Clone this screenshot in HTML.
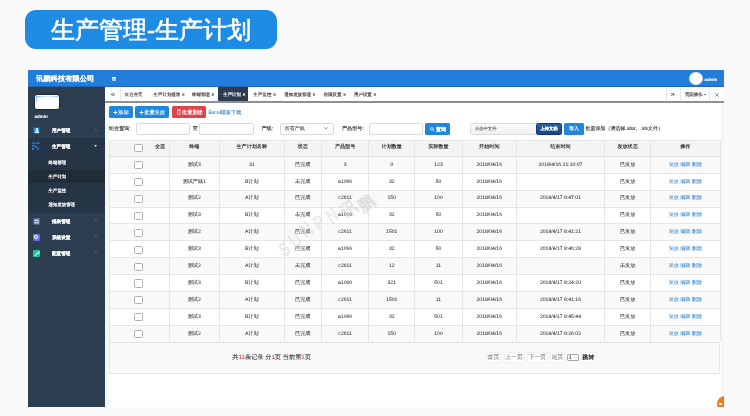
<!DOCTYPE html><html><head><meta charset="utf-8"><style>
*{margin:0;padding:0;box-sizing:border-box}
html,body{width:750px;height:416px;overflow:hidden;background:#fafafa;font-family:"Liberation Sans",sans-serif}
#root{position:absolute;left:0;top:0;width:750px;height:416px;background:#fafafa;will-change:transform;overflow:hidden}
.a{position:absolute;white-space:nowrap}
.tx{position:absolute;white-space:nowrap;text-rendering:geometricPrecision}
#title{left:25px;top:10px;width:252px;height:39px;border-radius:11px;background:#1e8be4}
#title span{position:absolute;left:26px;top:3.5px;font-size:24px;line-height:32px;color:#fff;-webkit-text-stroke:0.65px #fff}
#hdr{left:28px;top:70px;width:696px;height:16.8px;background:#237edb}
#side{left:28px;top:86.8px;width:77px;height:320.2px;background:#2e3e51}
#content{left:105px;top:86.8px;width:619px;height:320.2px;background:#f5f6f8}
#tabs{left:105px;top:86.8px;width:619px;height:14.3px;background:#fff}
#tabline{left:105px;top:101.1px;width:619px;height:1.6px;background:#8c9197}
#panel{left:109px;top:102.7px;width:611.5px;height:304.3px;background:#fff}
.btn{position:absolute;height:12px;border-radius:1.5px}
.inp{position:absolute;height:12px;border:0.7px solid #dadada;border-radius:2px;background:#fff}
.vl{position:absolute;width:0.8px;background:#e6e6e6}
.hl{position:absolute;height:0.8px;background:#e6e6e6}
.cb{position:absolute;width:8.6px;height:8.6px;border:0.8px solid #b0b0b0;border-radius:1.4px;background:#fff}
.tsep{position:absolute;top:87.5px;height:13.5px;width:0.6px;background:#e8e8e8}
.ico{position:absolute;width:7.4px;height:7.4px;border-radius:1px;overflow:hidden}
</style></head><body><div id="root">
<div id="title" class="a"><span>生产管理-生产计划</span></div>
<div id="hdr" class="a"></div>
<div class="a" style="left:28px;top:85.8px;width:696px;height:1px;background:#1868c2"></div>
<div class="tx" style="left:36.00px;top:72.20px;font-size:7.30px;line-height:14.60px;color:#fff;font-weight:bold;-webkit-text-stroke:0.1px #fff;">讯鹏科技有限公司</div>
<div class="a" style="left:112.3px;top:77.2px;width:4px;height:0.9px;background:#fff;box-shadow:0 1.3px 0 #fff,0 2.6px 0 #fff"></div>
<div class="a" style="left:689.4px;top:71.9px;width:13.2px;height:13px;border-radius:50%;background:#fff;border:0.6px solid #cfe3f7"></div>
<div class="tx" style="left:704.60px;top:75.50px;font-size:4.30px;line-height:8.60px;color:#fff;font-weight:bold;-webkit-text-stroke:0.1px #fff;">admin</div>
<div id="side" class="a"></div>
<div id="content" class="a"></div>
<div id="tabs" class="a"></div>
<div id="tabline" class="a"></div>
<div id="panel" class="a"></div>
<div class="a" style="left:33.6px;top:94.2px;width:26.6px;height:15.6px;border-radius:3px;background:#fff;border:0.9px solid #1b2632"></div>
<div class="a" style="left:35.8px;top:96.2px;width:22.2px;height:1px;background:linear-gradient(90deg,#6cc0f0,#c8e8fa 40%,#d6eefb 70%,#7cc6f0)"></div>
<div class="a" style="left:36px;top:97.4px;width:1.4px;height:1.4px;background:#8cc8ee"></div>
<div class="a" style="left:36px;top:99px;width:1.4px;height:1.2px;background:#e8c59a"></div>
<div class="a" style="left:36px;top:100.4px;width:1.4px;height:1.2px;background:#8cc8ee"></div>
<div class="tx" style="left:34.40px;top:111.70px;font-size:4.50px;line-height:9.00px;color:#fff;font-weight:bold;-webkit-text-stroke:0.1px #fff;">admin</div>
<div class="a" style="left:28px;top:138px;width:77px;height:75px;background:#263545"></div>
<div class="a" style="left:28px;top:170px;width:77px;height:13px;background:#212c39"></div>
<div class="ico a" style="left:32.6px;top:126.7px;background:#1a9be6;border:0.5px solid #14609a"><div class="a" style="left:2.1px;top:0.8px;width:2.3px;height:2.3px;border-radius:50%;background:#fff"></div><div class="a" style="left:1.4px;top:3.4px;width:3.7px;height:2.6px;border-radius:1.6px 1.6px 0 0;background:#f1eee4"></div></div>
<svg class="a" style="left:32.4px;top:141.8px" width="7.8" height="8.4" viewBox="0 0 78 84"><path d="M0 2h34v18h-34zM42 2h34v18h-34zM0 28h26v20h-26zM0 56h22v26h-22zM34 30l42 36-12 16-42-36z" fill="#1f74bb"/></svg>
<div class="ico a" style="left:32.5px;top:217.5px;background:#8d9bd0;border:0.5px solid #4f5f90"><div class="a" style="left:1px;top:1.2px;width:4.4px;height:3.8px;background:#c4cbe8"></div><div class="a" style="left:1px;top:2.6px;width:4.4px;height:0.5px;background:#7d8bc4"></div></div>
<div class="ico a" style="left:32.5px;top:233.5px;background:#5d6de0"><div class="a" style="left:1.6px;top:1.6px;width:4.2px;height:4.2px;border-radius:50%;border:1px solid #fff;box-shadow:0 0 0 0.4px rgba(255,255,255,0.5)"></div></div>
<div class="ico a" style="left:32.5px;top:249.8px;background:#1bc39a"><svg class="a" style="left:0;top:0" width="7.4" height="7.4" viewBox="0 0 8 8"><path d="M1.6 6.6L4.6 3.4M4.3 2.6a1.3 1.3 0 1 0 1.3 -1.2" stroke="#fff" stroke-width="1" fill="none"/></svg></div>
<div class="tx" style="left:52.00px;top:126.30px;font-size:4.60px;line-height:9.20px;color:#fff;font-weight:bold;-webkit-text-stroke:0.1px #fff;">用户管理</div>
<div class="tx" style="left:52.00px;top:141.90px;font-size:4.60px;line-height:9.20px;color:#fff;font-weight:bold;-webkit-text-stroke:0.1px #fff;">生产管理</div>
<div class="tx" style="left:52.00px;top:216.90px;font-size:4.60px;line-height:9.20px;color:#fff;font-weight:bold;-webkit-text-stroke:0.1px #fff;">报表管理</div>
<div class="tx" style="left:52.00px;top:232.80px;font-size:4.60px;line-height:9.20px;color:#fff;font-weight:bold;-webkit-text-stroke:0.1px #fff;">系统设置</div>
<div class="tx" style="left:52.00px;top:248.60px;font-size:4.60px;line-height:9.20px;color:#fff;font-weight:bold;-webkit-text-stroke:0.1px #fff;">配置管理</div>
<div class="tx" style="left:48.60px;top:158.90px;font-size:4.40px;line-height:8.80px;color:#f2f4f6;-webkit-text-stroke:0.22px #f2f4f6;">终端管理</div>
<div class="tx" style="left:48.60px;top:173.10px;font-size:4.40px;line-height:8.80px;color:#f2f4f6;-webkit-text-stroke:0.22px #f2f4f6;">生产计划</div>
<div class="tx" style="left:48.60px;top:186.80px;font-size:4.40px;line-height:8.80px;color:#f2f4f6;-webkit-text-stroke:0.22px #f2f4f6;">生产监控</div>
<div class="tx" style="left:48.60px;top:200.50px;font-size:4.40px;line-height:8.80px;color:#f2f4f6;-webkit-text-stroke:0.22px #f2f4f6;">通知发放管理</div>
<svg class="a" style="left:94.5px;top:128.5px" width="2" height="3" viewBox="0 0 2 3"><path d="M0.3 0.3L1.5 1.5L0.3 2.7" stroke="#8593a3" stroke-width="0.6" fill="none"/></svg>
<svg class="a" style="left:94.5px;top:219.1px" width="2" height="3" viewBox="0 0 2 3"><path d="M0.3 0.3L1.5 1.5L0.3 2.7" stroke="#8593a3" stroke-width="0.6" fill="none"/></svg>
<svg class="a" style="left:94.5px;top:235.0px" width="2" height="3" viewBox="0 0 2 3"><path d="M0.3 0.3L1.5 1.5L0.3 2.7" stroke="#8593a3" stroke-width="0.6" fill="none"/></svg>
<svg class="a" style="left:94.5px;top:250.8px" width="2" height="3" viewBox="0 0 2 3"><path d="M0.3 0.3L1.5 1.5L0.3 2.7" stroke="#8593a3" stroke-width="0.6" fill="none"/></svg>
<svg class="a" style="left:93.6px;top:144.8px" width="3" height="2" viewBox="0 0 3 2"><path d="M0 0h3l-1.5 2z" fill="#cdd5de"/></svg>
<svg class="a" style="left:110.8px;top:93.3px" width="3.8" height="2.8" viewBox="0 0 3.8 2.8"><path d="M1.7 0.2L0.4 1.4L1.7 2.6M3.5 0.2L2.2 1.4L3.5 2.6" stroke="#2a2a2a" stroke-width="0.95" fill="none"/></svg>
<div class="tsep" style="left:119.5px"></div>
<div class="tx" style="left:124.80px;top:91.15px;font-size:4.45px;line-height:8.90px;color:#5a5a5a;-webkit-text-stroke:0.1px #5a5a5a;">欢迎首页</div>
<div class="a" style="left:218.2px;top:87.3px;width:29.9px;height:13.9px;background:#2c3c4e"></div>
<div class="tx" style="left:153.60px;top:91.15px;font-size:4.45px;line-height:8.90px;color:#444;-webkit-text-stroke:0.15px #444;">生产计划报表 <b style="margin-left:0.6px">×</b></div>
<div class="tx" style="left:192.00px;top:91.15px;font-size:4.45px;line-height:8.90px;color:#444;-webkit-text-stroke:0.15px #444;">终端管理 <b style="margin-left:0.6px">×</b></div>
<div class="tx" style="left:223.20px;top:91.15px;font-size:4.45px;line-height:8.90px;color:#fff;-webkit-text-stroke:0.15px #fff;">生产计划 <b style="margin-left:0.6px">×</b></div>
<div class="tx" style="left:253.60px;top:91.15px;font-size:4.45px;line-height:8.90px;color:#444;-webkit-text-stroke:0.15px #444;">生产监控 <b style="margin-left:0.6px">×</b></div>
<div class="tx" style="left:284.30px;top:91.15px;font-size:4.45px;line-height:8.90px;color:#444;-webkit-text-stroke:0.15px #444;">通知发放管理 <b style="margin-left:0.6px">×</b></div>
<div class="tx" style="left:323.70px;top:91.15px;font-size:4.45px;line-height:8.90px;color:#444;-webkit-text-stroke:0.15px #444;">权限设置 <b style="margin-left:0.6px">×</b></div>
<div class="tx" style="left:354.00px;top:91.15px;font-size:4.45px;line-height:8.90px;color:#444;-webkit-text-stroke:0.15px #444;">用户设置 <b style="margin-left:0.6px">×</b></div>
<div class="tsep" style="left:666.3px"></div>
<svg class="a" style="left:671.3px;top:93.3px" width="3.8" height="2.8" viewBox="0 0 3.8 2.8"><path d="M0.3 0.2L1.6 1.4L0.3 2.6M2.1 0.2L3.4 1.4L2.1 2.6" stroke="#2a2a2a" stroke-width="0.95" fill="none"/></svg>
<div class="tsep" style="left:680.2px"></div>
<div class="tx" style="left:684.90px;top:91.15px;font-size:4.45px;line-height:8.90px;color:#444;-webkit-text-stroke:0.15px #444;">页面操作</div>
<svg class="a" style="left:704.2px;top:94.4px" width="2.2" height="1.4" viewBox="0 0 2.2 1.4"><path d="M0 0h2.2l-1.1 1.4z" fill="#666"/></svg>
<div class="tsep" style="left:709.3px"></div>
<svg class="a" style="left:715px;top:93px" width="4" height="4" viewBox="0 0 4 4"><path d="M0.3 0.3L3.7 3.7M3.7 0.3L0.3 3.7" stroke="#666" stroke-width="0.7"/></svg>
<div class="btn" style="left:108.8px;top:106.1px;width:24.4px;background:#1f88de"></div>
<svg class="a" style="left:113px;top:110px" width="5" height="5" viewBox="0 0 5 5"><path d="M2.5 0.6v3.8M0.6 2.5h3.8" stroke="#fff" stroke-width="1"/></svg>
<div class="tx" style="left:118.30px;top:107.80px;font-size:5.20px;line-height:10.40px;color:#fff;-webkit-text-stroke:0.1px #fff;">添加</div>
<div class="btn" style="left:135.2px;top:106.1px;width:34.3px;background:#1f88de"></div>
<svg class="a" style="left:139px;top:110px" width="5" height="5" viewBox="0 0 5 5"><path d="M2.5 0.6v3.8M0.6 2.5h3.8" stroke="#fff" stroke-width="1"/></svg>
<div class="tx" style="left:144.30px;top:107.80px;font-size:5.20px;line-height:10.40px;color:#fff;-webkit-text-stroke:0.1px #fff;">批量发放</div>
<div class="btn" style="left:171.9px;top:106.1px;width:34.6px;background:#dc454b"></div>
<svg class="a" style="left:176.8px;top:109.2px" width="4" height="5.6" viewBox="0 0 4 5.6"><path d="M0.2 1h3.6M1.3 1V0.3h1.4V1M0.7 1.4h2.6v3.9h-2.6z" stroke="#fff" stroke-width="0.6" fill="none"/></svg>
<div class="tx" style="left:182.00px;top:107.80px;font-size:5.20px;line-height:10.40px;color:#fff;-webkit-text-stroke:0.1px #fff;">批量删除</div>
<div class="tx" style="left:208.40px;top:107.90px;font-size:5.10px;line-height:10.20px;color:#3f8ccf;-webkit-text-stroke:0.1px #3f8ccf;">Excel模板下载</div>
<div class="tx" style="left:109.00px;top:124.10px;font-size:5.10px;line-height:10.20px;color:#333;-webkit-text-stroke:0.1px #333;">组合查询:</div>
<div class="inp" style="left:135.5px;top:122.7px;width:54.5px"></div>
<div class="tx" style="left:192.80px;top:124.10px;font-size:5.10px;line-height:10.20px;color:#333;-webkit-text-stroke:0.1px #333;">至</div>
<div class="inp" style="left:199px;top:122.7px;width:54.6px"></div>
<div class="tx" style="left:261.50px;top:124.10px;font-size:5.10px;line-height:10.20px;color:#333;-webkit-text-stroke:0.1px #333;">产线:</div>
<div class="inp" style="left:279.5px;top:122.7px;width:54px"></div>
<div class="tx" style="left:284.80px;top:124.20px;font-size:5.00px;line-height:10.00px;color:#555;-webkit-text-stroke:0.1px #555;">所有产线</div>
<svg class="a" style="left:324.3px;top:127.3px" width="4" height="2.6" viewBox="0 0 4 2.6"><path d="M0.3 0.3L2 2.1L3.7 0.3" stroke="#555" stroke-width="0.6" fill="none"/></svg>
<div class="tx" style="left:342.00px;top:124.10px;font-size:5.10px;line-height:10.20px;color:#333;-webkit-text-stroke:0.1px #333;">产品型号:</div>
<div class="inp" style="left:369px;top:122.7px;width:54px"></div>
<div class="btn" style="left:425.3px;top:122.5px;width:25.2px;background:#1f88de"></div>
<svg class="a" style="left:429.8px;top:126.6px" width="4.6" height="4.6" viewBox="0 0 5 5"><circle cx="2" cy="2" r="1.4" stroke="#fff" stroke-width="0.8" fill="none"/><path d="M3 3L4.5 4.5" stroke="#fff" stroke-width="0.9"/></svg>
<div class="tx" style="left:436.00px;top:124.50px;font-size:5.00px;line-height:10.00px;color:#fff;font-weight:bold;-webkit-text-stroke:0.1px #fff;">查询</div>
<div class="inp" style="left:469.7px;top:122.6px;width:67px;background:linear-gradient(#fbfbfb,#f1f1f1);border-color:#dcdcdc"></div>
<div class="tx" style="left:474.70px;top:125.00px;font-size:4.40px;line-height:8.80px;color:#666;-webkit-text-stroke:0.1px #666;">未选中文件</div>
<div class="btn" style="left:535.7px;top:122.5px;width:26.3px;background:linear-gradient(#2763a8,#174583);border:0.5px solid #123a6e"></div>
<div class="tx" style="left:540.40px;top:125.25px;font-size:4.25px;line-height:8.50px;color:#fff;font-weight:bold;-webkit-text-stroke:0.1px #fff;">上传文档</div>
<div class="btn" style="left:564px;top:122.5px;width:19.7px;background:#1f88de"></div>
<div class="tx" style="left:569.00px;top:124.40px;font-size:5.00px;line-height:10.00px;color:#fff;-webkit-text-stroke:0.15px #fff;">导入</div>
<div class="tx" style="left:585.60px;top:124.40px;font-size:5.00px;line-height:10.00px;color:#333;-webkit-text-stroke:0.1px #333;">批量添加（请选择.xlsx、.xls文件）</div>
<div class="a" style="left:109px;top:140.3px;width:611px;height:16.0px;background:#f4f4f4"></div>
<div class="a" style="left:109px;top:156.30px;width:611px;height:16.88px;background:#f9f9f9"></div>
<div class="a" style="left:109px;top:173.18px;width:611px;height:16.88px;background:#ffffff"></div>
<div class="a" style="left:109px;top:190.06px;width:611px;height:16.88px;background:#f9f9f9"></div>
<div class="a" style="left:109px;top:206.95px;width:611px;height:16.88px;background:#ffffff"></div>
<div class="a" style="left:109px;top:223.83px;width:611px;height:16.88px;background:#f9f9f9"></div>
<div class="a" style="left:109px;top:240.71px;width:611px;height:16.88px;background:#ffffff"></div>
<div class="a" style="left:109px;top:257.59px;width:611px;height:16.88px;background:#f9f9f9"></div>
<div class="a" style="left:109px;top:274.47px;width:611px;height:16.88px;background:#ffffff"></div>
<div class="a" style="left:109px;top:291.35px;width:611px;height:16.88px;background:#f9f9f9"></div>
<div class="a" style="left:109px;top:308.24px;width:611px;height:16.88px;background:#ffffff"></div>
<div class="a" style="left:109px;top:325.12px;width:611px;height:16.88px;background:#f9f9f9"></div>
<div class="hl" style="left:109px;top:139.9px;width:611px"></div>
<div class="hl" style="left:109px;top:155.60000000000002px;width:611px;height:1.2px;background:#dddddd"></div>
<div class="hl" style="left:109px;top:172.78px;width:611px"></div>
<div class="hl" style="left:109px;top:189.66px;width:611px"></div>
<div class="hl" style="left:109px;top:206.55px;width:611px"></div>
<div class="hl" style="left:109px;top:223.43px;width:611px"></div>
<div class="hl" style="left:109px;top:240.31px;width:611px"></div>
<div class="hl" style="left:109px;top:257.19px;width:611px"></div>
<div class="hl" style="left:109px;top:274.07px;width:611px"></div>
<div class="hl" style="left:109px;top:290.95px;width:611px"></div>
<div class="hl" style="left:109px;top:307.84px;width:611px"></div>
<div class="hl" style="left:109px;top:324.72px;width:611px"></div>
<div class="hl" style="left:109px;top:341.60px;width:611px"></div>
<div class="vl" style="left:108.6px;top:140.3px;height:201.7px"></div>
<div class="vl" style="left:168.6px;top:140.3px;height:201.7px"></div>
<div class="vl" style="left:219.1px;top:140.3px;height:201.7px"></div>
<div class="vl" style="left:283.6px;top:140.3px;height:201.7px"></div>
<div class="vl" style="left:321.1px;top:140.3px;height:201.7px"></div>
<div class="vl" style="left:368.3px;top:140.3px;height:201.7px"></div>
<div class="vl" style="left:414.40000000000003px;top:140.3px;height:201.7px"></div>
<div class="vl" style="left:461.8px;top:140.3px;height:201.7px"></div>
<div class="vl" style="left:516.0px;top:140.3px;height:201.7px"></div>
<div class="vl" style="left:604.1px;top:140.3px;height:201.7px"></div>
<div class="vl" style="left:650.3000000000001px;top:140.3px;height:201.7px"></div>
<div class="vl" style="left:719.6px;top:140.3px;height:201.7px"></div>
<div class="cb" style="left:134.3px;top:144.20px;width:8.3px;height:8.1px"></div>
<div class="tx" style="left:155.00px;top:142.20px;font-size:5.10px;line-height:10.20px;color:#333;font-weight:bold;">全选</div>
<div class="tx" style="left:169.00px;top:142.20px;font-size:5.10px;line-height:10.20px;color:#333;font-weight:bold;width:50.50px;text-align:center;">终端</div>
<div class="tx" style="left:219.50px;top:142.20px;font-size:5.10px;line-height:10.20px;color:#333;font-weight:bold;width:64.50px;text-align:center;">生产计划名称</div>
<div class="tx" style="left:284.00px;top:142.20px;font-size:5.10px;line-height:10.20px;color:#333;font-weight:bold;width:37.50px;text-align:center;">状态</div>
<div class="tx" style="left:321.50px;top:142.20px;font-size:5.10px;line-height:10.20px;color:#333;font-weight:bold;width:47.20px;text-align:center;">产品型号</div>
<div class="tx" style="left:368.70px;top:142.20px;font-size:5.10px;line-height:10.20px;color:#333;font-weight:bold;width:46.10px;text-align:center;">计划数量</div>
<div class="tx" style="left:414.80px;top:142.20px;font-size:5.10px;line-height:10.20px;color:#333;font-weight:bold;width:47.40px;text-align:center;">实际数量</div>
<div class="tx" style="left:462.20px;top:142.20px;font-size:5.10px;line-height:10.20px;color:#333;font-weight:bold;width:54.20px;text-align:center;">开始时间</div>
<div class="tx" style="left:516.40px;top:142.20px;font-size:5.10px;line-height:10.20px;color:#333;font-weight:bold;width:88.10px;text-align:center;">结束时间</div>
<div class="tx" style="left:604.50px;top:142.20px;font-size:5.10px;line-height:10.20px;color:#333;font-weight:bold;width:46.20px;text-align:center;">发放状态</div>
<div class="tx" style="left:650.70px;top:142.20px;font-size:5.10px;line-height:10.20px;color:#333;font-weight:bold;width:69.30px;text-align:center;">操作</div>
<div class="cb" style="left:134.3px;top:161.24px;width:8.3px;height:8.1px"></div>
<div class="tx" style="left:169.00px;top:159.69px;font-size:5.10px;line-height:10.20px;color:#333;width:50.50px;text-align:center;-webkit-text-stroke:0.04px #333;">测试3</div>
<div class="tx" style="left:219.50px;top:159.69px;font-size:5.10px;line-height:10.20px;color:#333;width:64.50px;text-align:center;-webkit-text-stroke:0.04px #333;">31</div>
<div class="tx" style="left:284.00px;top:159.69px;font-size:5.10px;line-height:10.20px;color:#333;width:37.50px;text-align:center;-webkit-text-stroke:0.04px #333;">已完成</div>
<div class="tx" style="left:321.50px;top:159.69px;font-size:5.10px;line-height:10.20px;color:#333;width:47.20px;text-align:center;-webkit-text-stroke:0.04px #333;">3</div>
<div class="tx" style="left:368.70px;top:159.69px;font-size:5.10px;line-height:10.20px;color:#333;width:46.10px;text-align:center;-webkit-text-stroke:0.04px #333;">9</div>
<div class="tx" style="left:414.80px;top:159.69px;font-size:5.10px;line-height:10.20px;color:#333;width:47.40px;text-align:center;-webkit-text-stroke:0.04px #333;">123</div>
<div class="tx" style="left:462.20px;top:159.69px;font-size:5.10px;line-height:10.20px;color:#333;width:54.20px;text-align:center;-webkit-text-stroke:0.04px #333;">2018/04/16</div>
<div class="tx" style="left:516.40px;top:159.69px;font-size:5.10px;line-height:10.20px;color:#333;width:88.10px;text-align:center;-webkit-text-stroke:0.04px #333;">2018/4/16 21:10:07</div>
<div class="tx" style="left:604.50px;top:159.69px;font-size:5.10px;line-height:10.20px;color:#333;width:46.20px;text-align:center;-webkit-text-stroke:0.04px #333;">已发放</div>
<div class="tx" style="left:650.70px;top:159.69px;font-size:5.10px;line-height:10.20px;color:#3a8ad0;width:69.30px;text-align:center;-webkit-text-stroke:0.04px #3a8ad0;">发放 编辑 删除</div>
<div class="cb" style="left:134.3px;top:178.12px;width:8.3px;height:8.1px"></div>
<div class="tx" style="left:169.00px;top:176.57px;font-size:5.10px;line-height:10.20px;color:#333;width:50.50px;text-align:center;-webkit-text-stroke:0.04px #333;">测试产线1</div>
<div class="tx" style="left:219.50px;top:176.57px;font-size:5.10px;line-height:10.20px;color:#333;width:64.50px;text-align:center;-webkit-text-stroke:0.04px #333;">B计划</div>
<div class="tx" style="left:284.00px;top:176.57px;font-size:5.10px;line-height:10.20px;color:#333;width:37.50px;text-align:center;-webkit-text-stroke:0.04px #333;">未完成</div>
<div class="tx" style="left:321.50px;top:176.57px;font-size:5.10px;line-height:10.20px;color:#333;width:47.20px;text-align:center;-webkit-text-stroke:0.04px #333;">a1066</div>
<div class="tx" style="left:368.70px;top:176.57px;font-size:5.10px;line-height:10.20px;color:#333;width:46.10px;text-align:center;-webkit-text-stroke:0.04px #333;">32</div>
<div class="tx" style="left:414.80px;top:176.57px;font-size:5.10px;line-height:10.20px;color:#333;width:47.40px;text-align:center;-webkit-text-stroke:0.04px #333;">50</div>
<div class="tx" style="left:462.20px;top:176.57px;font-size:5.10px;line-height:10.20px;color:#333;width:54.20px;text-align:center;-webkit-text-stroke:0.04px #333;">2018/04/16</div>
<div class="tx" style="left:516.40px;top:176.57px;font-size:5.10px;line-height:10.20px;color:#333;width:88.10px;text-align:center;-webkit-text-stroke:0.04px #333;"></div>
<div class="tx" style="left:604.50px;top:176.57px;font-size:5.10px;line-height:10.20px;color:#333;width:46.20px;text-align:center;-webkit-text-stroke:0.04px #333;">已发放</div>
<div class="tx" style="left:650.70px;top:176.57px;font-size:5.10px;line-height:10.20px;color:#3a8ad0;width:69.30px;text-align:center;-webkit-text-stroke:0.04px #3a8ad0;">发放 编辑 删除</div>
<div class="cb" style="left:134.3px;top:195.00px;width:8.3px;height:8.1px"></div>
<div class="tx" style="left:169.00px;top:193.45px;font-size:5.10px;line-height:10.20px;color:#333;width:50.50px;text-align:center;-webkit-text-stroke:0.04px #333;">测试2</div>
<div class="tx" style="left:219.50px;top:193.45px;font-size:5.10px;line-height:10.20px;color:#333;width:64.50px;text-align:center;-webkit-text-stroke:0.04px #333;">A计划</div>
<div class="tx" style="left:284.00px;top:193.45px;font-size:5.10px;line-height:10.20px;color:#333;width:37.50px;text-align:center;-webkit-text-stroke:0.04px #333;">已完成</div>
<div class="tx" style="left:321.50px;top:193.45px;font-size:5.10px;line-height:10.20px;color:#333;width:47.20px;text-align:center;-webkit-text-stroke:0.04px #333;">c2611</div>
<div class="tx" style="left:368.70px;top:193.45px;font-size:5.10px;line-height:10.20px;color:#333;width:46.10px;text-align:center;-webkit-text-stroke:0.04px #333;">150</div>
<div class="tx" style="left:414.80px;top:193.45px;font-size:5.10px;line-height:10.20px;color:#333;width:47.40px;text-align:center;-webkit-text-stroke:0.04px #333;">100</div>
<div class="tx" style="left:462.20px;top:193.45px;font-size:5.10px;line-height:10.20px;color:#333;width:54.20px;text-align:center;-webkit-text-stroke:0.04px #333;">2018/04/16</div>
<div class="tx" style="left:516.40px;top:193.45px;font-size:5.10px;line-height:10.20px;color:#333;width:88.10px;text-align:center;-webkit-text-stroke:0.04px #333;">2018/4/17 8:47:01</div>
<div class="tx" style="left:604.50px;top:193.45px;font-size:5.10px;line-height:10.20px;color:#333;width:46.20px;text-align:center;-webkit-text-stroke:0.04px #333;">已发放</div>
<div class="tx" style="left:650.70px;top:193.45px;font-size:5.10px;line-height:10.20px;color:#3a8ad0;width:69.30px;text-align:center;-webkit-text-stroke:0.04px #3a8ad0;">发放 编辑 删除</div>
<div class="cb" style="left:134.3px;top:211.89px;width:8.3px;height:8.1px"></div>
<div class="tx" style="left:169.00px;top:210.34px;font-size:5.10px;line-height:10.20px;color:#333;width:50.50px;text-align:center;-webkit-text-stroke:0.04px #333;">测试3</div>
<div class="tx" style="left:219.50px;top:210.34px;font-size:5.10px;line-height:10.20px;color:#333;width:64.50px;text-align:center;-webkit-text-stroke:0.04px #333;">B计划</div>
<div class="tx" style="left:284.00px;top:210.34px;font-size:5.10px;line-height:10.20px;color:#333;width:37.50px;text-align:center;-webkit-text-stroke:0.04px #333;">未完成</div>
<div class="tx" style="left:321.50px;top:210.34px;font-size:5.10px;line-height:10.20px;color:#333;width:47.20px;text-align:center;-webkit-text-stroke:0.04px #333;">a1066</div>
<div class="tx" style="left:368.70px;top:210.34px;font-size:5.10px;line-height:10.20px;color:#333;width:46.10px;text-align:center;-webkit-text-stroke:0.04px #333;">32</div>
<div class="tx" style="left:414.80px;top:210.34px;font-size:5.10px;line-height:10.20px;color:#333;width:47.40px;text-align:center;-webkit-text-stroke:0.04px #333;">50</div>
<div class="tx" style="left:462.20px;top:210.34px;font-size:5.10px;line-height:10.20px;color:#333;width:54.20px;text-align:center;-webkit-text-stroke:0.04px #333;">2018/04/16</div>
<div class="tx" style="left:516.40px;top:210.34px;font-size:5.10px;line-height:10.20px;color:#333;width:88.10px;text-align:center;-webkit-text-stroke:0.04px #333;"></div>
<div class="tx" style="left:604.50px;top:210.34px;font-size:5.10px;line-height:10.20px;color:#333;width:46.20px;text-align:center;-webkit-text-stroke:0.04px #333;">已发放</div>
<div class="tx" style="left:650.70px;top:210.34px;font-size:5.10px;line-height:10.20px;color:#3a8ad0;width:69.30px;text-align:center;-webkit-text-stroke:0.04px #3a8ad0;">发放 编辑 删除</div>
<div class="cb" style="left:134.3px;top:228.77px;width:8.3px;height:8.1px"></div>
<div class="tx" style="left:169.00px;top:227.22px;font-size:5.10px;line-height:10.20px;color:#333;width:50.50px;text-align:center;-webkit-text-stroke:0.04px #333;">测试2</div>
<div class="tx" style="left:219.50px;top:227.22px;font-size:5.10px;line-height:10.20px;color:#333;width:64.50px;text-align:center;-webkit-text-stroke:0.04px #333;">A计划</div>
<div class="tx" style="left:284.00px;top:227.22px;font-size:5.10px;line-height:10.20px;color:#333;width:37.50px;text-align:center;-webkit-text-stroke:0.04px #333;">已完成</div>
<div class="tx" style="left:321.50px;top:227.22px;font-size:5.10px;line-height:10.20px;color:#333;width:47.20px;text-align:center;-webkit-text-stroke:0.04px #333;">c2611</div>
<div class="tx" style="left:368.70px;top:227.22px;font-size:5.10px;line-height:10.20px;color:#333;width:46.10px;text-align:center;-webkit-text-stroke:0.04px #333;">1501</div>
<div class="tx" style="left:414.80px;top:227.22px;font-size:5.10px;line-height:10.20px;color:#333;width:47.40px;text-align:center;-webkit-text-stroke:0.04px #333;">100</div>
<div class="tx" style="left:462.20px;top:227.22px;font-size:5.10px;line-height:10.20px;color:#333;width:54.20px;text-align:center;-webkit-text-stroke:0.04px #333;">2018/04/16</div>
<div class="tx" style="left:516.40px;top:227.22px;font-size:5.10px;line-height:10.20px;color:#333;width:88.10px;text-align:center;-webkit-text-stroke:0.04px #333;">2018/4/17 8:41:21</div>
<div class="tx" style="left:604.50px;top:227.22px;font-size:5.10px;line-height:10.20px;color:#333;width:46.20px;text-align:center;-webkit-text-stroke:0.04px #333;">已发放</div>
<div class="tx" style="left:650.70px;top:227.22px;font-size:5.10px;line-height:10.20px;color:#3a8ad0;width:69.30px;text-align:center;-webkit-text-stroke:0.04px #3a8ad0;">发放 编辑 删除</div>
<div class="cb" style="left:134.3px;top:245.65px;width:8.3px;height:8.1px"></div>
<div class="tx" style="left:169.00px;top:244.10px;font-size:5.10px;line-height:10.20px;color:#333;width:50.50px;text-align:center;-webkit-text-stroke:0.04px #333;">测试3</div>
<div class="tx" style="left:219.50px;top:244.10px;font-size:5.10px;line-height:10.20px;color:#333;width:64.50px;text-align:center;-webkit-text-stroke:0.04px #333;">B计划</div>
<div class="tx" style="left:284.00px;top:244.10px;font-size:5.10px;line-height:10.20px;color:#333;width:37.50px;text-align:center;-webkit-text-stroke:0.04px #333;">已完成</div>
<div class="tx" style="left:321.50px;top:244.10px;font-size:5.10px;line-height:10.20px;color:#333;width:47.20px;text-align:center;-webkit-text-stroke:0.04px #333;">a1066</div>
<div class="tx" style="left:368.70px;top:244.10px;font-size:5.10px;line-height:10.20px;color:#333;width:46.10px;text-align:center;-webkit-text-stroke:0.04px #333;">32</div>
<div class="tx" style="left:414.80px;top:244.10px;font-size:5.10px;line-height:10.20px;color:#333;width:47.40px;text-align:center;-webkit-text-stroke:0.04px #333;">50</div>
<div class="tx" style="left:462.20px;top:244.10px;font-size:5.10px;line-height:10.20px;color:#333;width:54.20px;text-align:center;-webkit-text-stroke:0.04px #333;">2018/04/16</div>
<div class="tx" style="left:516.40px;top:244.10px;font-size:5.10px;line-height:10.20px;color:#333;width:88.10px;text-align:center;-webkit-text-stroke:0.04px #333;">2018/4/17 8:46:28</div>
<div class="tx" style="left:604.50px;top:244.10px;font-size:5.10px;line-height:10.20px;color:#333;width:46.20px;text-align:center;-webkit-text-stroke:0.04px #333;">已发放</div>
<div class="tx" style="left:650.70px;top:244.10px;font-size:5.10px;line-height:10.20px;color:#3a8ad0;width:69.30px;text-align:center;-webkit-text-stroke:0.04px #3a8ad0;">发放 编辑 删除</div>
<div class="cb" style="left:134.3px;top:262.53px;width:8.3px;height:8.1px"></div>
<div class="tx" style="left:169.00px;top:260.98px;font-size:5.10px;line-height:10.20px;color:#333;width:50.50px;text-align:center;-webkit-text-stroke:0.04px #333;">测试2</div>
<div class="tx" style="left:219.50px;top:260.98px;font-size:5.10px;line-height:10.20px;color:#333;width:64.50px;text-align:center;-webkit-text-stroke:0.04px #333;">A计划</div>
<div class="tx" style="left:284.00px;top:260.98px;font-size:5.10px;line-height:10.20px;color:#333;width:37.50px;text-align:center;-webkit-text-stroke:0.04px #333;">未完成</div>
<div class="tx" style="left:321.50px;top:260.98px;font-size:5.10px;line-height:10.20px;color:#333;width:47.20px;text-align:center;-webkit-text-stroke:0.04px #333;">c2611</div>
<div class="tx" style="left:368.70px;top:260.98px;font-size:5.10px;line-height:10.20px;color:#333;width:46.10px;text-align:center;-webkit-text-stroke:0.04px #333;">12</div>
<div class="tx" style="left:414.80px;top:260.98px;font-size:5.10px;line-height:10.20px;color:#333;width:47.40px;text-align:center;-webkit-text-stroke:0.04px #333;">11</div>
<div class="tx" style="left:462.20px;top:260.98px;font-size:5.10px;line-height:10.20px;color:#333;width:54.20px;text-align:center;-webkit-text-stroke:0.04px #333;">2018/04/16</div>
<div class="tx" style="left:516.40px;top:260.98px;font-size:5.10px;line-height:10.20px;color:#333;width:88.10px;text-align:center;-webkit-text-stroke:0.04px #333;"></div>
<div class="tx" style="left:604.50px;top:260.98px;font-size:5.10px;line-height:10.20px;color:#333;width:46.20px;text-align:center;-webkit-text-stroke:0.04px #333;">未发放</div>
<div class="tx" style="left:650.70px;top:260.98px;font-size:5.10px;line-height:10.20px;color:#3a8ad0;width:69.30px;text-align:center;-webkit-text-stroke:0.04px #3a8ad0;">发放 编辑 删除</div>
<div class="cb" style="left:134.3px;top:279.41px;width:8.3px;height:8.1px"></div>
<div class="tx" style="left:169.00px;top:277.86px;font-size:5.10px;line-height:10.20px;color:#333;width:50.50px;text-align:center;-webkit-text-stroke:0.04px #333;">测试3</div>
<div class="tx" style="left:219.50px;top:277.86px;font-size:5.10px;line-height:10.20px;color:#333;width:64.50px;text-align:center;-webkit-text-stroke:0.04px #333;">B计划</div>
<div class="tx" style="left:284.00px;top:277.86px;font-size:5.10px;line-height:10.20px;color:#333;width:37.50px;text-align:center;-webkit-text-stroke:0.04px #333;">已完成</div>
<div class="tx" style="left:321.50px;top:277.86px;font-size:5.10px;line-height:10.20px;color:#333;width:47.20px;text-align:center;-webkit-text-stroke:0.04px #333;">a1066</div>
<div class="tx" style="left:368.70px;top:277.86px;font-size:5.10px;line-height:10.20px;color:#333;width:46.10px;text-align:center;-webkit-text-stroke:0.04px #333;">321</div>
<div class="tx" style="left:414.80px;top:277.86px;font-size:5.10px;line-height:10.20px;color:#333;width:47.40px;text-align:center;-webkit-text-stroke:0.04px #333;">501</div>
<div class="tx" style="left:462.20px;top:277.86px;font-size:5.10px;line-height:10.20px;color:#333;width:54.20px;text-align:center;-webkit-text-stroke:0.04px #333;">2018/04/16</div>
<div class="tx" style="left:516.40px;top:277.86px;font-size:5.10px;line-height:10.20px;color:#333;width:88.10px;text-align:center;-webkit-text-stroke:0.04px #333;">2018/4/17 8:24:20</div>
<div class="tx" style="left:604.50px;top:277.86px;font-size:5.10px;line-height:10.20px;color:#333;width:46.20px;text-align:center;-webkit-text-stroke:0.04px #333;">已发放</div>
<div class="tx" style="left:650.70px;top:277.86px;font-size:5.10px;line-height:10.20px;color:#3a8ad0;width:69.30px;text-align:center;-webkit-text-stroke:0.04px #3a8ad0;">发放 编辑 删除</div>
<div class="cb" style="left:134.3px;top:296.30px;width:8.3px;height:8.1px"></div>
<div class="tx" style="left:169.00px;top:294.75px;font-size:5.10px;line-height:10.20px;color:#333;width:50.50px;text-align:center;-webkit-text-stroke:0.04px #333;">测试2</div>
<div class="tx" style="left:219.50px;top:294.75px;font-size:5.10px;line-height:10.20px;color:#333;width:64.50px;text-align:center;-webkit-text-stroke:0.04px #333;">A计划</div>
<div class="tx" style="left:284.00px;top:294.75px;font-size:5.10px;line-height:10.20px;color:#333;width:37.50px;text-align:center;-webkit-text-stroke:0.04px #333;">已完成</div>
<div class="tx" style="left:321.50px;top:294.75px;font-size:5.10px;line-height:10.20px;color:#333;width:47.20px;text-align:center;-webkit-text-stroke:0.04px #333;">c2611</div>
<div class="tx" style="left:368.70px;top:294.75px;font-size:5.10px;line-height:10.20px;color:#333;width:46.10px;text-align:center;-webkit-text-stroke:0.04px #333;">1501</div>
<div class="tx" style="left:414.80px;top:294.75px;font-size:5.10px;line-height:10.20px;color:#333;width:47.40px;text-align:center;-webkit-text-stroke:0.04px #333;">11</div>
<div class="tx" style="left:462.20px;top:294.75px;font-size:5.10px;line-height:10.20px;color:#333;width:54.20px;text-align:center;-webkit-text-stroke:0.04px #333;">2018/04/16</div>
<div class="tx" style="left:516.40px;top:294.75px;font-size:5.10px;line-height:10.20px;color:#333;width:88.10px;text-align:center;-webkit-text-stroke:0.04px #333;">2018/4/17 8:41:16</div>
<div class="tx" style="left:604.50px;top:294.75px;font-size:5.10px;line-height:10.20px;color:#333;width:46.20px;text-align:center;-webkit-text-stroke:0.04px #333;">已发放</div>
<div class="tx" style="left:650.70px;top:294.75px;font-size:5.10px;line-height:10.20px;color:#3a8ad0;width:69.30px;text-align:center;-webkit-text-stroke:0.04px #3a8ad0;">发放 编辑 删除</div>
<div class="cb" style="left:134.3px;top:313.18px;width:8.3px;height:8.1px"></div>
<div class="tx" style="left:169.00px;top:311.63px;font-size:5.10px;line-height:10.20px;color:#333;width:50.50px;text-align:center;-webkit-text-stroke:0.04px #333;">测试3</div>
<div class="tx" style="left:219.50px;top:311.63px;font-size:5.10px;line-height:10.20px;color:#333;width:64.50px;text-align:center;-webkit-text-stroke:0.04px #333;">B计划</div>
<div class="tx" style="left:284.00px;top:311.63px;font-size:5.10px;line-height:10.20px;color:#333;width:37.50px;text-align:center;-webkit-text-stroke:0.04px #333;">已完成</div>
<div class="tx" style="left:321.50px;top:311.63px;font-size:5.10px;line-height:10.20px;color:#333;width:47.20px;text-align:center;-webkit-text-stroke:0.04px #333;">a1066</div>
<div class="tx" style="left:368.70px;top:311.63px;font-size:5.10px;line-height:10.20px;color:#333;width:46.10px;text-align:center;-webkit-text-stroke:0.04px #333;">32</div>
<div class="tx" style="left:414.80px;top:311.63px;font-size:5.10px;line-height:10.20px;color:#333;width:47.40px;text-align:center;-webkit-text-stroke:0.04px #333;">501</div>
<div class="tx" style="left:462.20px;top:311.63px;font-size:5.10px;line-height:10.20px;color:#333;width:54.20px;text-align:center;-webkit-text-stroke:0.04px #333;">2018/04/16</div>
<div class="tx" style="left:516.40px;top:311.63px;font-size:5.10px;line-height:10.20px;color:#333;width:88.10px;text-align:center;-webkit-text-stroke:0.04px #333;">2018/4/17 8:45:44</div>
<div class="tx" style="left:604.50px;top:311.63px;font-size:5.10px;line-height:10.20px;color:#333;width:46.20px;text-align:center;-webkit-text-stroke:0.04px #333;">已发放</div>
<div class="tx" style="left:650.70px;top:311.63px;font-size:5.10px;line-height:10.20px;color:#3a8ad0;width:69.30px;text-align:center;-webkit-text-stroke:0.04px #3a8ad0;">发放 编辑 删除</div>
<div class="cb" style="left:134.3px;top:330.06px;width:8.3px;height:8.1px"></div>
<div class="tx" style="left:169.00px;top:328.51px;font-size:5.10px;line-height:10.20px;color:#333;width:50.50px;text-align:center;-webkit-text-stroke:0.04px #333;">测试2</div>
<div class="tx" style="left:219.50px;top:328.51px;font-size:5.10px;line-height:10.20px;color:#333;width:64.50px;text-align:center;-webkit-text-stroke:0.04px #333;">A计划</div>
<div class="tx" style="left:284.00px;top:328.51px;font-size:5.10px;line-height:10.20px;color:#333;width:37.50px;text-align:center;-webkit-text-stroke:0.04px #333;">已完成</div>
<div class="tx" style="left:321.50px;top:328.51px;font-size:5.10px;line-height:10.20px;color:#333;width:47.20px;text-align:center;-webkit-text-stroke:0.04px #333;">c2611</div>
<div class="tx" style="left:368.70px;top:328.51px;font-size:5.10px;line-height:10.20px;color:#333;width:46.10px;text-align:center;-webkit-text-stroke:0.04px #333;">150</div>
<div class="tx" style="left:414.80px;top:328.51px;font-size:5.10px;line-height:10.20px;color:#333;width:47.40px;text-align:center;-webkit-text-stroke:0.04px #333;">100</div>
<div class="tx" style="left:462.20px;top:328.51px;font-size:5.10px;line-height:10.20px;color:#333;width:54.20px;text-align:center;-webkit-text-stroke:0.04px #333;">2018/04/16</div>
<div class="tx" style="left:516.40px;top:328.51px;font-size:5.10px;line-height:10.20px;color:#333;width:88.10px;text-align:center;-webkit-text-stroke:0.04px #333;">2018/4/17 8:26:02</div>
<div class="tx" style="left:604.50px;top:328.51px;font-size:5.10px;line-height:10.20px;color:#333;width:46.20px;text-align:center;-webkit-text-stroke:0.04px #333;">已发放</div>
<div class="tx" style="left:650.70px;top:328.51px;font-size:5.10px;line-height:10.20px;color:#3a8ad0;width:69.30px;text-align:center;-webkit-text-stroke:0.04px #3a8ad0;">发放 编辑 删除</div>
<div class="a" style="left:109px;top:341.5px;width:611px;height:32.3px;background:#f9f9f9;border-top:0.9px solid #e2e2e2;border-bottom:0.8px solid #e6e6e6;border-left:0.8px solid #e8e8e8;border-right:0.8px solid #e8e8e8"></div>
<div class="tx" style="left:232.30px;top:352.40px;font-size:6.20px;line-height:12.40px;color:#444;-webkit-text-stroke:0.1px #444;">共<span style="color:#e8353a;-webkit-text-stroke-color:#e8353a">11</span>条记录 分<span style="color:#e8353a;-webkit-text-stroke-color:#e8353a">1</span>页 当前第<span style="color:#e8353a;-webkit-text-stroke-color:#e8353a">1</span>页</div>
<div class="a" style="left:486.0px;top:351.6px;width:15.2px;height:11.6px;background:#fff;border:0.5px solid #f0f0f0;border-radius:1px"></div>
<div class="tx" style="left:487.60px;top:352.70px;font-size:5.80px;line-height:11.60px;color:#8c8c8c;-webkit-text-stroke:0.1px #8c8c8c;">首页</div>
<div class="a" style="left:503.7px;top:351.6px;width:20.599999999999998px;height:11.6px;background:#fff;border:0.5px solid #f0f0f0;border-radius:1px"></div>
<div class="tx" style="left:505.30px;top:352.70px;font-size:5.80px;line-height:11.60px;color:#8c8c8c;-webkit-text-stroke:0.1px #8c8c8c;">上一页</div>
<div class="a" style="left:527.1px;top:351.6px;width:20.599999999999998px;height:11.6px;background:#fff;border:0.5px solid #f0f0f0;border-radius:1px"></div>
<div class="tx" style="left:528.70px;top:352.70px;font-size:5.80px;line-height:11.60px;color:#8c8c8c;-webkit-text-stroke:0.1px #8c8c8c;">下一页</div>
<div class="a" style="left:550.1999999999999px;top:351.6px;width:15.2px;height:11.6px;background:#fff;border:0.5px solid #f0f0f0;border-radius:1px"></div>
<div class="tx" style="left:551.80px;top:352.70px;font-size:5.80px;line-height:11.60px;color:#8c8c8c;-webkit-text-stroke:0.1px #8c8c8c;">尾页</div>
<div class="a" style="left:580.6px;top:351.6px;width:15.8px;height:11.6px;background:#fff;border:0.5px solid #f0f0f0;border-radius:1px"></div>
<div class="a" style="left:567px;top:353.6px;width:12.2px;height:7.9px;border:0.7px solid #a8a8a8;border-radius:1.2px;background:#fff"></div>
<div class="tx" style="left:569.00px;top:353.30px;font-size:5.00px;line-height:10.00px;color:#333;-webkit-text-stroke:0.1px #333;">1</div>
<svg class="a" style="left:574.2px;top:356.6px" width="3.2" height="1.9" viewBox="0 0 3.2 1.9"><path d="M0.2 0.2L1.6 1.6L3 0.2" stroke="#666" stroke-width="0.5" fill="none"/></svg>
<div class="tx" style="left:582.60px;top:352.70px;font-size:5.80px;line-height:11.60px;color:#333;-webkit-text-stroke:0.3px #333;">跳转</div>
<svg class="a" style="left:0;top:0" width="750" height="416"><g fill="none" stroke="#d6d6d6" stroke-width="0.6" font-family="Liberation Sans"><text transform="translate(284.5,249.4) rotate(-35) scale(0.75,1)" text-anchor="middle" dominant-baseline="central" font-size="19">S</text><text transform="translate(295.5,240.5) rotate(-35) scale(0.75,1)" text-anchor="middle" dominant-baseline="central" font-size="19">U</text><text transform="translate(306.3,229.8) rotate(-35) scale(0.75,1)" text-anchor="middle" dominant-baseline="central" font-size="19">N</text><text transform="translate(319.2,222.8) rotate(-35) scale(0.75,1)" text-anchor="middle" dominant-baseline="central" font-size="19">P</text><text transform="translate(332.5,215.6) rotate(-35) scale(0.75,1)" text-anchor="middle" dominant-baseline="central" font-size="19">N</text><text transform="translate(349.4,208.4) rotate(-35) scale(0.95,1)" text-anchor="middle" dominant-baseline="central" font-size="17">讯</text><text transform="translate(366.3,203.3) rotate(-35) scale(0.95,1)" text-anchor="middle" dominant-baseline="central" font-size="17">鹏</text></g></svg>
<div class="a" style="left:105px;top:0;width:619px;height:407px;overflow:hidden"><div class="a" style="left:612.4px;top:395.8px;width:16.4px;height:16.4px;border-radius:50%;background:#f07d1c"></div><div class="a" style="left:614.2px;top:402.6px;width:3px;height:2.6px;border:0.6px solid #fff;border-radius:0.5px"></div></div>
</div></body></html>
